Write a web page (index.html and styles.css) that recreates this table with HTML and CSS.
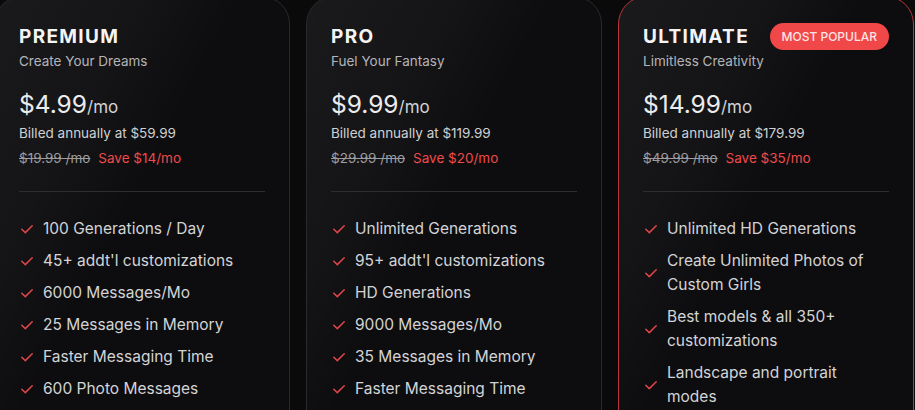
FILE: index.html
```html
<!DOCTYPE html>
<html lang="en">
<head>
<meta charset="utf-8">
<title>Pricing</title>
<link rel="stylesheet" href="styles.css">
</head>
<body>
<div class="plans">
  <section class="card">
    <div class="head"><h2 class="name">PREMIUM</h2></div>
    <p class="tagline">Create Your Dreams</p>
    <p class="price"><span class="amount">$4.99</span><span class="per">/mo</span></p>
    <p class="billed">Billed annually at $59.99</p>
    <p class="deal"><s class="old">$19.99 /mo</s><span class="save">Save $14/mo</span></p>
    <hr class="rule">
    <ul class="features">
      <li><svg class="check" viewBox="0 0 12 9"><path d="M0.8 4.2 L4.3 7.6 L11.2 0.8"/></svg><span>100 Generations / Day</span></li>
      <li><svg class="check" viewBox="0 0 12 9"><path d="M0.8 4.2 L4.3 7.6 L11.2 0.8"/></svg><span>45+ addt'l customizations</span></li>
      <li><svg class="check" viewBox="0 0 12 9"><path d="M0.8 4.2 L4.3 7.6 L11.2 0.8"/></svg><span>6000 Messages/Mo</span></li>
      <li><svg class="check" viewBox="0 0 12 9"><path d="M0.8 4.2 L4.3 7.6 L11.2 0.8"/></svg><span>25 Messages in Memory</span></li>
      <li><svg class="check" viewBox="0 0 12 9"><path d="M0.8 4.2 L4.3 7.6 L11.2 0.8"/></svg><span>Faster Messaging Time</span></li>
      <li><svg class="check" viewBox="0 0 12 9"><path d="M0.8 4.2 L4.3 7.6 L11.2 0.8"/></svg><span>600 Photo Messages</span></li>
    </ul>
  </section>
  <section class="card">
    <div class="head"><h2 class="name">PRO</h2></div>
    <p class="tagline">Fuel Your Fantasy</p>
    <p class="price"><span class="amount">$9.99</span><span class="per">/mo</span></p>
    <p class="billed">Billed annually at $119.99</p>
    <p class="deal"><s class="old">$29.99 /mo</s><span class="save">Save $20/mo</span></p>
    <hr class="rule">
    <ul class="features">
      <li><svg class="check" viewBox="0 0 12 9"><path d="M0.8 4.2 L4.3 7.6 L11.2 0.8"/></svg><span>Unlimited Generations</span></li>
      <li><svg class="check" viewBox="0 0 12 9"><path d="M0.8 4.2 L4.3 7.6 L11.2 0.8"/></svg><span>95+ addt'l customizations</span></li>
      <li><svg class="check" viewBox="0 0 12 9"><path d="M0.8 4.2 L4.3 7.6 L11.2 0.8"/></svg><span>HD Generations</span></li>
      <li><svg class="check" viewBox="0 0 12 9"><path d="M0.8 4.2 L4.3 7.6 L11.2 0.8"/></svg><span>9000 Messages/Mo</span></li>
      <li><svg class="check" viewBox="0 0 12 9"><path d="M0.8 4.2 L4.3 7.6 L11.2 0.8"/></svg><span>35 Messages in Memory</span></li>
      <li><svg class="check" viewBox="0 0 12 9"><path d="M0.8 4.2 L4.3 7.6 L11.2 0.8"/></svg><span>Faster Messaging Time</span></li>
    </ul>
  </section>
  <section class="card popular">
    <div class="head"><h2 class="name">ULTIMATE</h2><span class="badge">MOST POPULAR</span></div>
    <p class="tagline">Limitless Creativity</p>
    <p class="price"><span class="amount">$14.99</span><span class="per">/mo</span></p>
    <p class="billed">Billed annually at $179.99</p>
    <p class="deal"><s class="old">$49.99 /mo</s><span class="save">Save $35/mo</span></p>
    <hr class="rule">
    <ul class="features">
      <li><svg class="check" viewBox="0 0 12 9"><path d="M0.8 4.2 L4.3 7.6 L11.2 0.8"/></svg><span>Unlimited HD Generations</span></li>
      <li><svg class="check" viewBox="0 0 12 9"><path d="M0.8 4.2 L4.3 7.6 L11.2 0.8"/></svg><span>Create Unlimited Photos of Custom Girls</span></li>
      <li><svg class="check" viewBox="0 0 12 9"><path d="M0.8 4.2 L4.3 7.6 L11.2 0.8"/></svg><span>Best models &amp; all 350+ customizations</span></li>
      <li><svg class="check" viewBox="0 0 12 9"><path d="M0.8 4.2 L4.3 7.6 L11.2 0.8"/></svg><span>Landscape and portrait modes</span></li>
    </ul>
  </section>
</div>
</body>
</html>
```

FILE: styles.css
```css
html, body {
  margin: 0;
  padding: 0;
  background: #0a0a0b;
  overflow: hidden;
}
body {
  font-family: Inter, "Noto Sans", sans-serif;
  color: #d6d6d8;
}
.plans {
  display: flex;
  gap: 16px;
  margin: -4px 0 0 -6px;
}
.card {
  flex: 0 0 296px;
  box-sizing: border-box;
  height: 460px;
  padding: 26px 24px 24px;
  border: 1px solid #2a2a2d;
  border-radius: 28px;
  background:
    linear-gradient(118deg, rgba(255,255,255,0.055) 0%, rgba(255,255,255,0.03) 28%, rgba(255,255,255,0) 46%),
    #0d0d0f;
}
.card.popular {
  border-color: #b9363c;
}
.head {
  display: flex;
  align-items: center;
  justify-content: space-between;
  height: 27px;
}
.name {
  margin: 0;
  font-size: 19px;
  line-height: 24px;
  font-weight: 700;
  letter-spacing: 0.07em;
  color: #f4f4f5;
}
.badge {
  display: inline-flex;
  align-items: center;
  height: 27px;
  padding: 0 12px;
  border-radius: 14px;
  background: #f04848;
  color: #fde4e4;
  font-size: 12px;
  font-weight: 500;
}
.tagline {
  margin: 1px 0 0;
  font-size: 13.5px;
  line-height: 20px;
  color: #b4b4b8;
}
.price {
  margin: 17px 0 0;
  line-height: 32px;
  color: #ececee;
}
.amount {
  font-size: 24.5px;
  font-weight: 400;
}
.per {
  font-size: 17px;
  color: #d2d2d4;
}
.billed {
  margin: 0;
  font-size: 13.5px;
  line-height: 20px;
  color: #d0d0d2;
}
.deal {
  margin: 5px 0 0;
  font-size: 13.5px;
  line-height: 20px;
  display: flex;
  gap: 8px;
}
.old {
  color: #9c9ca0;
}
.save {
  color: #f04a4a;
}
.rule {
  margin: 23px 0 0;
  border: 0;
  height: 1px;
  background: #2e2e32;
}
.features {
  list-style: none;
  margin: 25px 0 0;
  padding: 0 12px 0 0;
  display: flex;
  flex-direction: column;
  gap: 8px;
}
.features li {
  display: flex;
  align-items: center;
  gap: 10px;
  font-size: 15.5px;
  line-height: 24px;
  color: #d4d4d6;
}
.check {
  flex: 0 0 12px;
  width: 12px;
  height: 9px;
  margin-left: 2px;
  fill: none;
  stroke: #e0454b;
  stroke-width: 1.5;
  stroke-linecap: round;
  stroke-linejoin: round;
}
```
